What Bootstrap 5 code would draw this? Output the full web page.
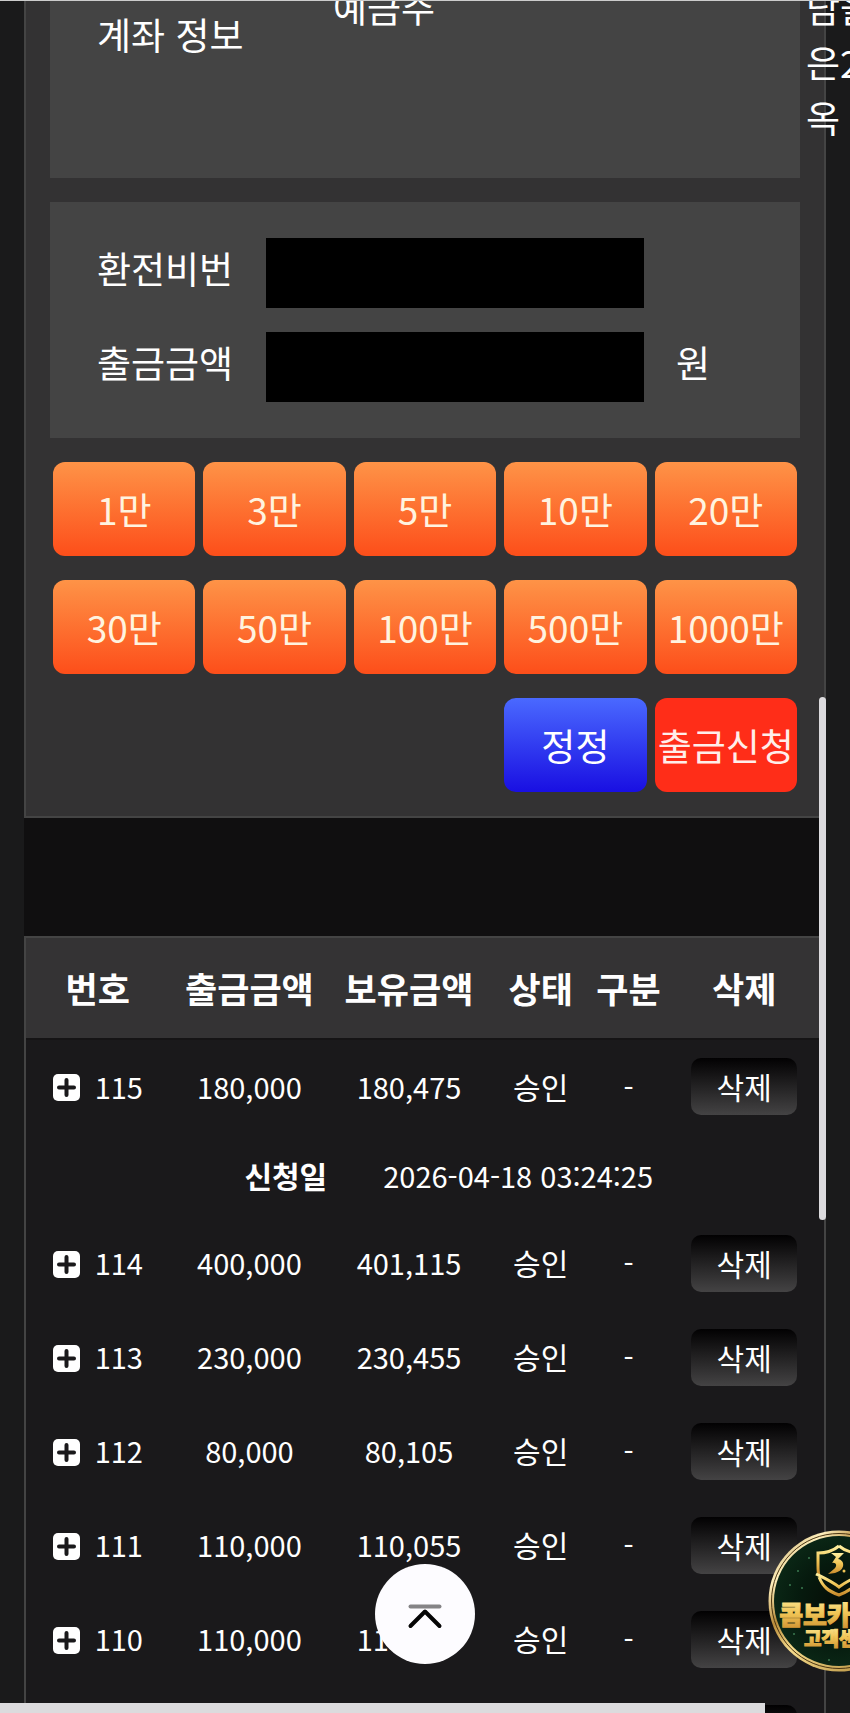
<!DOCTYPE html>
<html lang="ko">
<head>
<meta charset="utf-8">
<meta name="viewport" content="width=device-width, initial-scale=1">
<title>출금신청</title>
<link rel="stylesheet" href="https://cdn.jsdelivr.net/npm/bootstrap@5.3.0/dist/css/bootstrap.min.css">
<style>
  body { background: #1a1a1b; color: #fff; font-family: "Noto Sans CJK KR", sans-serif; font-size: 37px; line-height: 55px; }
  .screen { border-top: 1px solid #ccc; }
  .page { margin: 0 24px; background: #100f10; }
  .panel { background: #333233; border: 2px solid #444; border-top: 0; padding: 0 24px 24px; }
  .box { background: #444; padding-left: 47px; }
  .account { display: flow-root; height: 177px; }
  .account > div { margin-top: -21px; }
  .account .caption { width: 236px; padding-top: 27px; }
  .account .note { width: 0; margin-right: -6px; white-space: nowrap; }
  .entry { padding-top: 36px; padding-bottom: 36px; }
  .entry label { width: 169px; margin-top: -10px; }
  .entry .unit { margin-top: -10px; padding-left: 32px; }
  .entry .form-control { width: 378px; height: 70px; background: #000; border: 0; color: #fff; font-size: 37px; }
  .keys { display: grid; grid-template-columns: repeat(5, 1fr); gap: 24px 8px; padding: 24px 3px 0; }
  .keys .btn { --bs-btn-color: #fff3df; --bs-btn-hover-color: #fff; height: 94px; padding: 2px 0 0; border: 0; border-radius: 12px; font-size: 37px; white-space: nowrap; background: linear-gradient(#fe9347, #fd4e1a); }
  .keys .btn-reset { --bs-btn-color: #fff; grid-column: 4; background: linear-gradient(#4a69ff, #190fe2); }
  .keys .btn-apply { --bs-btn-color: #ffeeea; background: #ff2d18; }
  .history { margin-top: 118px; border: 2px solid #444; background: #1a191b; }
  .history table { width: 100%; table-layout: fixed; text-align: center; font-size: 29px; line-height: 40px; }
  .history th, .history td { padding: 0; vertical-align: middle; white-space: nowrap; }
  .history thead th { height: 101px; background: #343334; font-size: 35px; border-bottom: 2px solid #151415; }
  .history .item { height: 94px; }
  .history .item td { padding-bottom: 2px; }
  .history .item td:last-child { padding-bottom: 0; }
  .history .detail { height: 83px; }
  .history .detail th { padding-right: 2px; font-size: 30px; }
  .history .detail td { padding-left: 54px; }
  .history .state { font-size: 30px; }
  .history .btn { --bs-btn-color: #fff; --bs-btn-hover-color: #fff; width: 106px; height: 57px; padding: 0; border: 0; border-radius: 10px; font-size: 30px; background: linear-gradient(#020102, #444344); }
  .expand { gap: 15px; }
  .expand svg { margin-top: 4px; }
  .vbar { right: 24px; top: 696px; width: 7px; height: 523px; border-radius: 4px; background: #dcdbde; }
  .hbar { left: 0; bottom: 0; width: 90%; height: 10px; background: #dcdbdd; }
  .to-top { left: 50%; bottom: 49px; width: 100px; height: 100px; margin-left: -50px; border: 0; background: #fdfcff; }
  .support { right: -60px; bottom: 41px; width: 142px; height: 142px; }
</style>
</head>
<body>
<div class="screen vh-100 overflow-hidden position-relative">
  <main class="page">
    <section class="panel">
      <div class="box account">
        <div class="d-flex align-items-start">
          <div class="caption">계좌 정보</div>
          <div class="flex-grow-1">예금주</div>
          <div class="note">담을<br>은2<br>옥</div>
        </div>
      </div>
      <form class="box entry mt-4 d-flex flex-column gap-4">
        <div class="d-flex align-items-center">
          <label for="pin">환전비번</label>
          <input class="form-control rounded-0" id="pin" type="password">
        </div>
        <div class="d-flex align-items-center">
          <label for="amount">출금금액</label>
          <input class="form-control rounded-0" id="amount" type="text" inputmode="numeric">
          <span class="unit">원</span>
        </div>
      </form>
      <div class="keys">
        <button type="button" class="btn">1만</button>
        <button type="button" class="btn">3만</button>
        <button type="button" class="btn">5만</button>
        <button type="button" class="btn">10만</button>
        <button type="button" class="btn">20만</button>
        <button type="button" class="btn">30만</button>
        <button type="button" class="btn">50만</button>
        <button type="button" class="btn">100만</button>
        <button type="button" class="btn">500만</button>
        <button type="button" class="btn">1000만</button>
        <button type="button" class="btn btn-reset">정정</button>
        <button type="button" class="btn btn-apply">출금신청</button>
      </div>
    </section>

    <section class="history">
      <table>
        <colgroup>
          <col style="width:18%"><col style="width:20%"><col style="width:20%"><col style="width:13%"><col style="width:9%"><col style="width:20%">
        </colgroup>
        <thead>
          <tr><th>번호</th><th>출금금액</th><th>보유금액</th><th>상태</th><th>구분</th><th>삭제</th></tr>
        </thead>
        <tbody id="rows"></tbody>
      </table>
    </section>
  </main>

  <div class="vbar position-absolute"></div>
  <div class="hbar position-absolute"></div>

  <button type="button" class="to-top position-absolute rounded-circle p-0" aria-label="맨 위로">
    <svg class="d-block" width="100" height="100" viewBox="0 0 100 100" fill="none" stroke-linecap="round" stroke-linejoin="round">
      <path d="M35.500 42.500H64.500" stroke="#858486" stroke-width="4"/>
      <path d="M35.500 62L50 47.500L64.500 62" stroke="#050505" stroke-width="4"/>
    </svg>
  </button>

  <a href="#" class="support position-absolute">
    <svg class="d-block" width="142" height="142" viewBox="0 0 142 142">
      <defs>
        <linearGradient id="rim" x1="0" y1="0" x2="1" y2="1">
          <stop offset="0" stop-color="#a8843f"/><stop offset=".2" stop-color="#fff0bd"/><stop offset=".35" stop-color="#b98c3a"/><stop offset=".5" stop-color="#f6dc8d"/><stop offset="1" stop-color="#9c7220"/>
        </linearGradient>
        <linearGradient id="gold" x1="0" y1="0" x2="0" y2="1">
          <stop offset="0" stop-color="#fff0a0"/><stop offset=".5" stop-color="#f0c455"/><stop offset="1" stop-color="#c98a2c"/>
        </linearGradient>
        <radialGradient id="felt">
          <stop offset="0" stop-color="#060d06"/><stop offset=".6" stop-color="#061a0e"/><stop offset="1" stop-color="#0a2615"/>
        </radialGradient>
      </defs>
      <circle cx="71" cy="71" r="70.500" fill="url(#rim)"/>
      <circle cx="71" cy="71" r="67.500" fill="none" stroke="#4a3512" stroke-width="1"/>
      <circle cx="71" cy="71" r="65" fill="url(#felt)"/>
      <g fill="#3b7a50"><circle cx="41" cy="28" r="1"/><circle cx="30" cy="41" r="1"/><circle cx="22" cy="55" r="1"/><circle cx="34" cy="58" r="1"/><circle cx="26" cy="104" r="1"/><circle cx="61" cy="130" r="1"/></g>
      <g fill="none" stroke="url(#gold)" stroke-linejoin="miter">
        <path d="M71 16C65 21 58 23 50 23V36C50 40 50 43 51 45M71 16C77 21 84 23 92 23V36C92 40 92 43 91 45" stroke-width="3"/>
        <path d="M48 44C56 48 63 51 71 57C79 51 86 48 94 44C90 55 82 61 71 65C60 61 55 57 51 47" stroke-width="3"/>
      </g>
      <path d="M63 23H76L70 29C77 30 78 40 67 43L60 44L66 39C70 36 68 32 64 33L68 27Z" fill="url(#gold)"/>
      <circle cx="76" cy="41" r="1.500" fill="#f0c455"/>
      <g fill="url(#gold)" stroke="url(#gold)" font-family="'Noto Sans CJK KR', sans-serif" font-weight="900" text-anchor="middle">
        <text x="71" y="95" font-size="26" stroke-width="1">콤보카지노</text>
        <text x="71" y="116" font-size="19" stroke-width="1">고객센터</text>
      </g>
    </svg>
  </a>
</div>
<script src="https://cdn.jsdelivr.net/npm/bootstrap@5.3.0/dist/js/bootstrap.bundle.min.js"></script>
<script>
  const plus = '<svg width="27" height="27" viewBox="0 0 27 27" aria-hidden="true"><rect width="27" height="27" rx="5" fill="#fff"/><path d="M13.500 6V21M6 13.500H21" stroke="#1a191b" stroke-width="4" stroke-linecap="round"/></svg>';
  const items = [
    [115, '180,000', '180,475', '2026-04-18 03:24:25'],
    [114, '400,000', '401,115'],
    [113, '230,000', '230,455'],
    [112, '80,000', '80,105'],
    [111, '110,000', '110,055'],
    [110, '110,000', '110,055'],
    ['', '', '']
  ];
  document.getElementById('rows').innerHTML = items.map(([no, amount, balance, date]) =>
    `<tr class="item"><td>${no ? `<div class="expand d-flex align-items-center justify-content-center">${plus}<span>${no}</span></div>` : ''}</td>
     <td>${amount}</td><td>${balance}</td><td class="state">${no ? '승인' : ''}</td><td>${no ? '-' : ''}</td>
     <td><button type="button" class="btn">${no ? '삭제' : ''}</button></td></tr>` +
    (date ? `<tr class="detail"><th colspan="2" class="text-end">신청일</th><td colspan="4" class="text-start">${date}</td></tr>` : '')
  ).join('');
</script>
</body>
</html>
